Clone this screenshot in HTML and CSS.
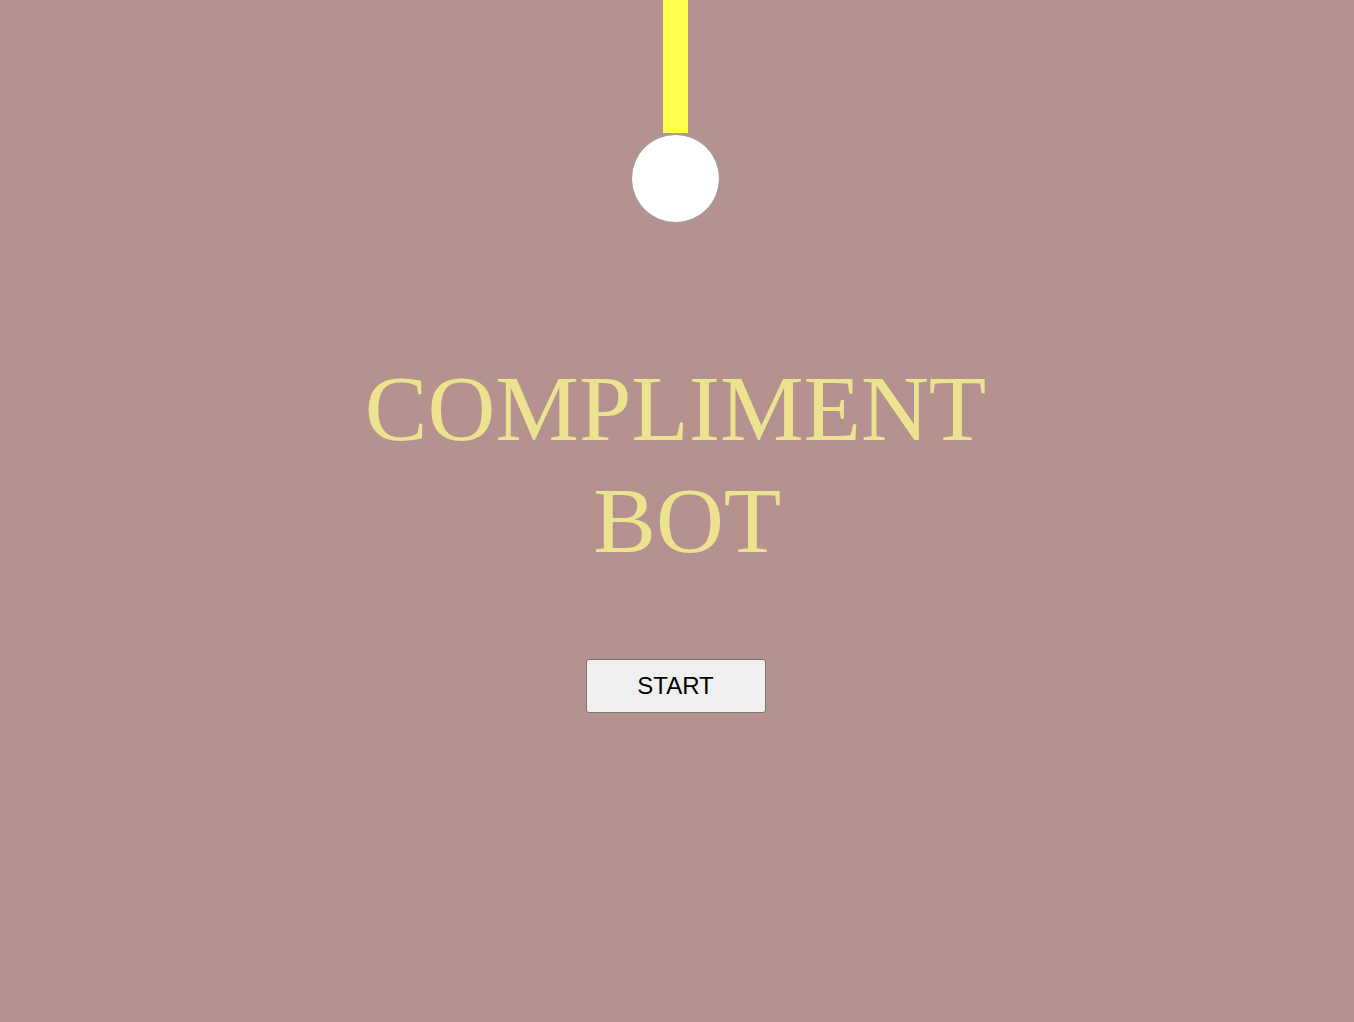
FILE: index.html
```html
<!DOCTYPE html>
<html>
<head>
<meta charset="utf-8">
<link rel="stylesheet" href="styles.css">
</head>
<body>
<main class="page">
  <div class="lamp">
    <div class="cord"></div>
    <div class="bulb"></div>
  </div>
  <h1 class="title"><span class="line">COMPLIMENT</span><span class="line">&nbsp;BOT</span></h1>
  <button class="start">START</button>
</main>
</body>
</html>
```
FILE: styles.css
```css
html, body {
  margin: 0;
  padding: 0;
  height: 100%;
  background: #b5918f;
}
.page {
  display: flex;
  flex-direction: column;
  align-items: center;
  min-height: 100%;
  padding-right: 3px;
  box-sizing: border-box;
}
.lamp {
  display: flex;
  flex-direction: column;
  align-items: center;
}
.cord {
  width: 25px;
  height: 133px;
  background: #ffff4d;
}
.bulb {
  width: 87px;
  height: 87px;
  border: 1px solid #9a9a9a;
  border-radius: 50%;
  background: #ffffff;
  margin-top: 1px;
}
.title {
  margin: 129px 0 0;
  font-family: "Liberation Serif", "Times New Roman", serif;
  font-weight: normal;
  font-size: 94px;
  line-height: 112px;
  color: #ebe38f;
  text-align: center;
  display: flex;
  flex-direction: column;
  align-items: center;
}
.line {
  display: block;
  white-space: pre;
}
.start {
  margin-top: 83px;
  width: 180px;
  height: 54px;
  background: #efefef;
  border: 1px solid #767676;
  border-radius: 3px;
  font-family: "Liberation Sans", Arial, sans-serif;
  font-size: 24px;
  color: #000;
  padding: 0;
}
```
